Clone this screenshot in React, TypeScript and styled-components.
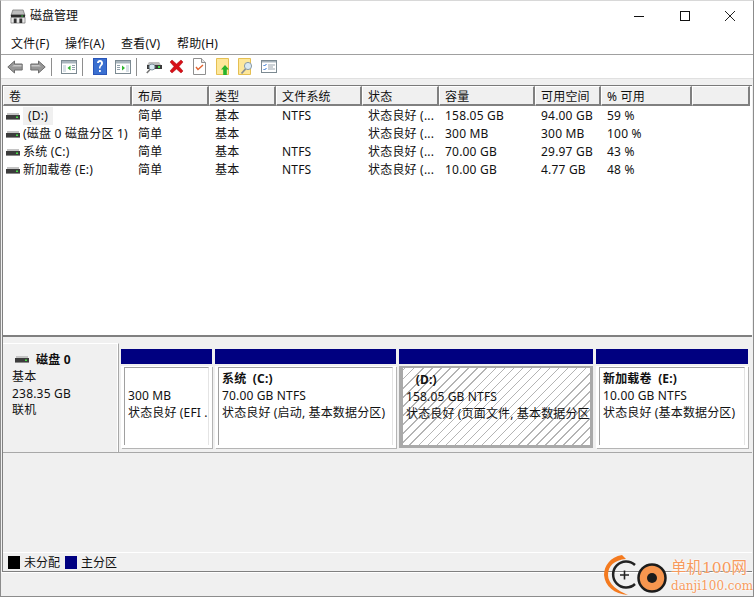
import React from "react";
import styled, { createGlobalStyle } from "styled-components";

const Global = createGlobalStyle`
  html, body { margin: 0; padding: 0; background: #f0f0f0; }
  * { box-sizing: border-box; }
`;

const FONT = `"Noto Sans", "Noto Sans CJK SC", sans-serif`;

const Win = styled.div`
  position: relative;
  width: 754px;
  height: 597px;
  display: flex;
  flex-direction: column;
  overflow: hidden;
  background: #f0f0f0;
  border: 1px solid #8c8c8c;
  border-top-color: #d8d8d8;
  font: 12px/17px ${FONT};
  letter-spacing: 0.2px;
  color: #111;
`;
const TitleBar = styled.div`
  height: 30px;
  flex: none;
  background: #fff;
  display: flex;
  align-items: center;
  padding-left: 9px;
`;
const TitleText = styled.span`
  flex: 1;
  font-size: 12px;
  letter-spacing: 0;
  margin: 0 0 2px 4px;
`;
const WinButton = styled.div`
  width: 45.5px;
  height: 30px;
  flex: none;
  display: flex;
  align-items: center;
  justify-content: center;
`;
const MenuBar = styled.div`
  height: 24px;
  flex: none;
  background: #fff;
  border-bottom: 1px solid #a0a0a0;
  display: flex;
  align-items: center;
  padding: 1px 0 0 1px;
`;
const MenuItem = styled.span<{ $w: number }>`
  padding-left: 9px;
  width: ${(p) => p.$w}px;
  white-space: nowrap;
`;
const Toolbar = styled.div`
  height: 23px;
  flex: none;
  background: #fff;
  display: flex;
  align-items: center;
  padding-left: 2px;
`;
const ToolBtn = styled.div`
  width: 23px;
  height: 22px;
  flex: none;
  display: flex;
  align-items: center;
  justify-content: center;
`;
const ToolSep = styled.div`
  width: 1px;
  height: 18px;
  flex: none;
  margin: 0 5px 0 2px;
  background: #8e8e8e;
`;
const Band = styled.div`
  height: 7px;
  flex: none;
  background: #f0f0f0;
  border-top: 1px solid #e0e0e0;
`;
const ListPane = styled.div`
  height: 252px;
  flex: none;
  margin-left: 1px;
  margin-right: 1px;
  border-left: 1px solid #808080;
  border-top: 1px solid #7a7a7a;
  border-bottom: 2px solid #808080;
  background: #fff;
  display: flex;
  flex-direction: column;
`;
const columns = "129px 77px 67px 86px 77px 96px 66px 91px 58px";
const HeaderRow = styled.div`
  display: grid;
  grid-template-columns: ${columns};
  height: 20px;
  flex: none;
`;
const HeaderCell = styled.div`
  background: #f0f0f0;
  border-top: 1px solid #fff;
  border-left: 1px solid #fff;
  border-right: 2px solid #808080;
  border-bottom: 2px solid #808080;
  padding: 1px 0 0 5px;
  line-height: 17px;
  white-space: nowrap;
  overflow: hidden;
`;
const DataRow = styled.div`
  display: grid;
  grid-template-columns: ${columns};
  height: 18px;
  line-height: 18px;
  flex: none;
  &:nth-child(2) { margin-top: 1px; }
`;
const Cell = styled.div`
  padding-left: 6px;
  white-space: nowrap;
  overflow: hidden;
`;
const NameCell = styled.div`
  padding-left: 3px;
  display: flex;
  align-items: center;
  gap: 3px;
  white-space: nowrap;
`;
const NameText = styled.span<{ $selected?: boolean }>`
  background: ${(p) => (p.$selected ? "#f0f0f0" : "transparent")};
  padding: 0 ${(p) => (p.$selected ? "5px" : "0")};
`;
const Lower = styled.div`
  flex: 1;
  margin-left: 1px;
  margin-right: 1px;
  border-left: 1px solid #808080;
  display: flex;
  flex-direction: column;
  background: #f0f0f0;
  padding-top: 6px;
`;
const DiskRow = styled.div`
  height: 110px;
  flex: none;
  display: flex;
`;
const DiskInfo = styled.div`
  width: 116px;
  flex: none;
  background: #f0f0f0;
  border-top: 1px solid #fff;
  border-right: 1px solid #a8a8a8;
  border-bottom: 1px solid #a8a8a8;
  padding: 7px 0 0 9px;
  box-shadow: inset -1px 0 0 #fff;
`;
const DiskTitle = styled.div`
  display: flex;
  align-items: center;
  font-weight: 700;
  gap: 7px;
  margin: 0 0 2px 3px;
  height: 16px;
`;
const DiskLine = styled.div`
  height: 16.5px;
  line-height: 16.5px;
`;
const Partitions = styled.div`
  flex: 1;
  display: flex;
  gap: 3px;
  padding: 6px 0 4px 2px;
  border-bottom: 1px solid #a8a8a8;
  align-items: stretch;
`;
const Partition = styled.div<{ $w: number }>`
  width: ${(p) => p.$w}px;
  flex: none;
  display: flex;
  flex-direction: column;
  gap: 2px;
`;
const PartBar = styled.div`
  height: 15px;
  flex: none;
  background: #000080;
`;
const PartBody = styled.div<{ $selected?: boolean }>`
  flex: 1;
  background: ${(p) => (p.$selected ? "#a9a9a9" : "#fff")};
  padding: ${(p) => (p.$selected ? "2px 3px 3px 4px" : "1px 3px 3px 3px")};
  box-shadow: ${(p) => (p.$selected ? "none" : "1px 1px 0 #b4b4b4")};
  min-height: 0;
`;
const PartInner = styled.div<{ $hatched?: boolean }>`
  height: 100%;
  padding: ${(p) => (p.$hatched ? "3px 0 0 3px" : "2px 0 0 3px")};
  overflow: hidden;
  white-space: nowrap;
  letter-spacing: 0.15px;
  border-top: ${(p) => (p.$hatched ? "0" : "1px solid #a0a0a0")};
  border-left: ${(p) => (p.$hatched ? "0" : "1px solid #a0a0a0")};
  border-right: ${(p) => (p.$hatched ? "0" : "1px solid #e4e4e4")};
  background: ${(p) =>
    p.$hatched
      ? "repeating-linear-gradient(-45deg, #fff 0, #fff 5.4px, #b4b4b4 5.4px, #b4b4b4 6.4px)"
      : "#fff"};
`;
const PartName = styled.div`
  font-weight: 700;
  height: 17px;
  white-space: pre;
`;
const PartLine = styled.div`
  height: 17px;
`;
const Spacer = styled.div`
  flex: 1;
`;
const Legend = styled.div`
  height: 20px;
  flex: none;
  border-top: 1px solid #fff;
  border-bottom: 1px solid #808080;
  display: flex;
  align-items: center;
  padding-left: 5px;
`;
const Swatch = styled.div<{ $c: string }>`
  width: 12px;
  height: 13px;
  background: ${(p) => p.$c};
  margin-right: 4px;
  flex: none;
`;
const LegendText = styled.span`
  margin-right: 5px;
  letter-spacing: 0;
`;
const StatusBar = styled.div`
  height: 24px;
  flex: none;
  background: #f0f0f0;
  border-top: 1px solid #fff;
`;
const Watermark = styled.div`
  position: absolute;
  right: 1px;
  bottom: 0;
  width: 150px;
  height: 45px;
  display: flex;
  align-items: center;
  gap: 3px;
  letter-spacing: 0;
`;
const MarkText = styled.div`
  display: flex;
  flex-direction: column;
  align-items: flex-start;
  padding-top: 4px;
  font-family: "DejaVu Serif", "Noto Sans CJK SC", serif;
  color: #f69a5d;
  text-shadow: 0 0 2px #fff, 0 0 2px #fff;
`;
const MarkTop = styled.span`
  font-size: 15.5px;
  line-height: 20px;
  white-space: nowrap;
`;
const MarkBottom = styled.span`
  font-size: 12px;
  line-height: 16px;
  white-space: nowrap;
`;

const DriveIcon = () => (
  <svg width="14" height="9" viewBox="0 0 14 9" style={{ flex: "none" }}>
    <path d="M1 1h12v2H1z" fill="#c4c4c4" />
    <path d="M0 3h14v4H0z" fill="#3c3c3c" />
    <path d="M0 7h14v1H0z" fill="#8a8a8a" />
    <path d="M10 4.500h2v1.500h-2z" fill="#46e046" />
  </svg>
);
const AppIcon = () => (
  <svg width="16" height="15" viewBox="0 0 17 16" preserveAspectRatio="none">
    <path d="M3 1h11l2 6H1z" fill="#bdbdbd" stroke="#555" strokeWidth=".6" />
    <path d="M1 6h15v3H1z" fill="#2c2c2c" />
    <path d="M12 7h2v1h-2z" fill="#3fe04a" />
    <path d="M1 9h15v6H1z" fill="#e8e8e8" stroke="#555" strokeWidth=".6" />
    <path d="M4 10h3v5H4zM10 10h3v5h-3z" fill="#333" />
  </svg>
);
const ArrowLeft = () => (
  <svg width="16" height="14" viewBox="0 0 16 14">
    <path d="M.8 7 7.500 1v3h7.700v6H7.500v3z" fill="#979797" stroke="#6e6e6e" />
    <path d="M7 5h7.500v1.500H5z" fill="#c8c8c8" />
  </svg>
);
const ArrowRight = () => (
  <svg width="16" height="14" viewBox="0 0 16 14">
    <path d="M15.200 7 8.500 1v3H.8v6h7.700v3z" fill="#979797" stroke="#6e6e6e" />
    <path d="M1.500 5H9l2 1.500H1.500z" fill="#c8c8c8" />
  </svg>
);
const PaneIcon = ({ right }: { right?: boolean }) => (
  <svg width="16" height="14" viewBox="0 0 16 14">
    <rect x=".5" y=".5" width="15" height="13" fill="#fff" stroke="#7c8a92" />
    <path d="M1 1h14v2.500H1z" fill="#a8b4bc" />
    {right ? (
      <>
        <path d="M11 5h3v7h-3z" fill="#d8e0e6" />
        <path d="M2 5h3v1H2zM2 7h3v1H2zM2 9h3v1H2z" fill="#8fa0ab" />
        <path d="M7 5.500 10 8l-3 2.500z" fill="#2fb52f" />
      </>
    ) : (
      <>
        <path d="M2 5h3v7H2z" fill="#d8e0e6" />
        <path d="M11 5h3v1h-3zM11 7h3v1h-3zM11 9h3v1h-3z" fill="#8fa0ab" />
        <path d="M9.500 5.500 6.500 8l3 2.500z" fill="#2fb52f" />
      </>
    )}
  </svg>
);
const HelpIcon = () => (
  <svg width="14" height="17" viewBox="0 0 14 17">
    <rect width="14" height="17" fill="#2a55b8" />
    <rect x="1" y="1" width="12" height="15" fill="#3a6fd0" />
    <path d="M4 5c0-4 6-4 6 0 0 3-2.500 2.500-2.500 5.500H6C6 7 8 7 8 5c0-1.500-2-1.500-2 0z" fill="#fff" />
    <rect x="6" y="12" width="1.800" height="2" fill="#fff" />
  </svg>
);
const ScanIcon = () => (
  <svg width="16" height="14" viewBox="0 0 16 14">
    <path d="M3 2h10l2 3H1z" fill="#bdbdbd" />
    <path d="M1 5h15v4H1z" fill="#3a3a3a" />
    <path d="M12 6h2v2h-2z" fill="#3ee24a" />
    <circle cx="6" cy="7" r="3" fill="#dbeaf3" stroke="#7d8f9a" />
    <path d="M4 9.500.8 13" stroke="#777" strokeWidth="1.600" />
  </svg>
);
const DeleteIcon = () => (
  <svg width="15" height="15" viewBox="0 0 15 15">
    <path d="M1 3 3 1l4.500 4L12 1l2 2-4 4.500 4 4.500-2 2-4.500-4L3 14l-2-2 4-4.500z" fill="#d80f17" stroke="#a80a10" strokeWidth=".5" />
  </svg>
);
const CheckDocIcon = () => (
  <svg width="13" height="17" viewBox="0 0 13 17">
    <path d="M.5.5h8l4 4v12H.5z" fill="#fff" stroke="#8f8f8f" />
    <path d="M8.500.5v4h4" fill="#e4e4e4" stroke="#8f8f8f" />
    <path d="m3 9 2 2.500L10 7" fill="none" stroke="#e2622d" strokeWidth="1.400" />
  </svg>
);
const FolderUpIcon = () => (
  <svg width="14" height="17" viewBox="0 0 14 17">
    <path d="M.5.5h12v16H.5z" fill="#fde79a" stroke="#e5bf52" />
    <path d="M9 7l4 4.500h-2.200V17H7.200v-5.500H5z" fill="#27b32c" />
  </svg>
);
const FolderFindIcon = () => (
  <svg width="15" height="17" viewBox="0 0 15 17">
    <path d="M.5.500h12v16H.5z" fill="#fde79a" stroke="#e5bf52" />
    <circle cx="10" cy="8" r="3.600" fill="#d8e8f3" stroke="#8a9aa5" />
    <path d="M7.500 11 3.500 15.500" stroke="#8a8f93" strokeWidth="1.800" />
  </svg>
);
const ListIcon = () => (
  <svg width="16" height="13" viewBox="0 0 16 13">
    <rect x=".5" y=".5" width="15" height="12" fill="#fff" stroke="#7c8a92" />
    <path d="M1 1h14v1.500H1z" fill="#a8b4bc" />
    <path d="m2.500 5 1 1 2-2M2.500 9l1 1 2-2" fill="none" stroke="#2a6fd0" />
    <path d="M7 5h7M7 7h5M7 9h7" stroke="#9aa5ad" />
  </svg>
);
const Minimize = () => (
  <svg width="10" height="10" viewBox="0 0 10 10"><path d="M0 5.500h10" stroke="#111" /></svg>
);
const Maximize = () => (
  <svg width="10" height="10" viewBox="0 0 10 10"><rect x=".5" y=".5" width="9" height="9" fill="none" stroke="#111" /></svg>
);
const Close = () => (
  <svg width="10" height="10" viewBox="0 0 10 10"><path d="m0 0 10 10M10 0 0 10" stroke="#222" /></svg>
);
const Logo = () => (
  <svg width="66" height="45" viewBox="0 0 66 45" style={{ flex: "none" }}>
    <path d="M20 4C8 6 2 15 2 24c1 11 10 19 24 20C16 40 6 33 6 24 6 15 12 9 24 8z" fill="#f47a1f" />
    <path d="M33 14a13 13 0 1 0 0 19" fill="none" stroke="#222" strokeWidth="2.500" />
    <path d="M18 24h9M22.500 19.500v9" stroke="#222" strokeWidth="1.600" />
    <circle cx="50" cy="27" r="13.500" fill="#f7964f" stroke="#1c1c1c" strokeWidth="2.500" />
    <circle cx="50" cy="27" r="5" fill="#1c1c1c" />
  </svg>
);

const menus = [
  { t: "文件(F)", w: 54 },
  { t: "操作(A)", w: 56 },
  { t: "查看(V)", w: 56 },
  { t: "帮助(H)", w: 56 },
];
const headers = ["卷", "布局", "类型", "文件系统", "状态", "容量", "可用空间", "% 可用", ""];
const rows = [
  { name: " (D:)", sel: true, fs: "NTFS", cap: "158.05 GB", free: "94.00 GB", pct: "59 %" },
  { name: "(磁盘 0 磁盘分区 1)", fs: "", cap: "300 MB", free: "300 MB", pct: "100 %" },
  { name: "系统 (C:)", fs: "NTFS", cap: "70.00 GB", free: "29.97 GB", pct: "43 %" },
  { name: "新加载卷 (E:)", fs: "NTFS", cap: "10.00 GB", free: "4.77 GB", pct: "48 %" },
];
const parts = [
  { w: 91, name: "", size: "300 MB", status: "状态良好 (EFI ." },
  { w: 181, name: "系统  (C:)", size: "70.00 GB NTFS", status: "状态良好 (启动, 基本数据分区)" },
  { w: 194, name: "   (D:)", size: "158.05 GB NTFS", status: "状态良好 (页面文件, 基本数据分区", sel: true },
  { w: 152, name: "新加载卷  (E:)", size: "10.00 GB NTFS", status: "状态良好 (基本数据分区)" },
];

export default function App() {
  return (
    <Win>
      <Global />
      <TitleBar>
        <AppIcon />
        <TitleText>磁盘管理</TitleText>
        <WinButton><Minimize /></WinButton>
        <WinButton><Maximize /></WinButton>
        <WinButton><Close /></WinButton>
      </TitleBar>
      <MenuBar>
        {menus.map((m) => (
          <MenuItem key={m.t} $w={m.w}>{m.t}</MenuItem>
        ))}
      </MenuBar>
      <Toolbar>
        <ToolBtn><ArrowLeft /></ToolBtn>
        <ToolBtn><ArrowRight /></ToolBtn>
        <ToolSep />
        <ToolBtn><PaneIcon /></ToolBtn>
        <ToolSep />
        <ToolBtn><HelpIcon /></ToolBtn>
        <ToolBtn><PaneIcon right /></ToolBtn>
        <ToolSep />
        <ToolBtn><ScanIcon /></ToolBtn>
        <ToolBtn><DeleteIcon /></ToolBtn>
        <ToolBtn><CheckDocIcon /></ToolBtn>
        <ToolBtn><FolderUpIcon /></ToolBtn>
        <ToolBtn><FolderFindIcon /></ToolBtn>
        <ToolBtn><ListIcon /></ToolBtn>
      </Toolbar>
      <Band />
      <ListPane>
        <HeaderRow>
          {headers.map((h, i) => (
            <HeaderCell key={i}>{h}</HeaderCell>
          ))}
        </HeaderRow>
        {rows.map((r) => (
          <DataRow key={r.name}>
            <NameCell>
              <DriveIcon />
              <NameText $selected={r.sel}>{r.name}</NameText>
            </NameCell>
            <Cell>简单</Cell>
            <Cell>基本</Cell>
            <Cell>{r.fs}</Cell>
            <Cell>状态良好 (...</Cell>
            <Cell>{r.cap}</Cell>
            <Cell>{r.free}</Cell>
            <Cell>{r.pct}</Cell>
          </DataRow>
        ))}
      </ListPane>
      <Lower>
        <DiskRow>
          <DiskInfo>
            <DiskTitle><DriveIcon />磁盘 0</DiskTitle>
            <DiskLine>基本</DiskLine>
            <DiskLine>238.35 GB</DiskLine>
            <DiskLine>联机</DiskLine>
          </DiskInfo>
          <Partitions>
            {parts.map((p) => (
              <Partition key={p.w} $w={p.w}>
                <PartBar />
                <PartBody $selected={p.sel}>
                  <PartInner $hatched={p.sel}>
                    <PartName>{p.name}</PartName>
                    <PartLine>{p.size}</PartLine>
                    <PartLine>{p.status}</PartLine>
                  </PartInner>
                </PartBody>
              </Partition>
            ))}
          </Partitions>
        </DiskRow>
        <Spacer />
        <Legend>
          <Swatch $c="#000" />
          <LegendText>未分配</LegendText>
          <Swatch $c="#000080" />
          <LegendText>主分区</LegendText>
        </Legend>
      </Lower>
      <StatusBar />
      <Watermark>
        <Logo />
        <MarkText>
          <MarkTop>单机100网</MarkTop>
          <MarkBottom>danji100.com</MarkBottom>
        </MarkText>
      </Watermark>
    </Win>
  );
}
